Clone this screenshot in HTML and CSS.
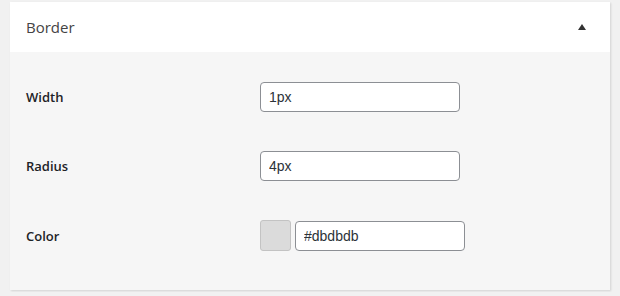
FILE: index.html
```html
<!DOCTYPE html>
<html lang="en">
<head>
    <meta charset="UTF-8">
    <title>Border</title>
    <link rel="stylesheet" href="styles.css">
</head>
<body>
    <div class="panel">
        <div class="panel-head">
            <h2>Border</h2>
            <span class="toggle"></span>
        </div>
        <div class="panel-body">
            <div class="row">
                <label for="bw">Width</label>
                <input type="text" id="bw" class="field" value="1px">
            </div>
            <div class="row">
                <label for="br">Radius</label>
                <input type="text" id="br" class="field" value="4px">
            </div>
            <div class="row">
                <label for="bc">Color</label>
                <div class="color-pick">
                    <span class="swatch"></span>
                    <input type="text" id="bc" class="field field-color" value="#dbdbdb">
                </div>
            </div>
        </div>
    </div>
</body>
</html>
```

FILE: styles.css
```css
*{
    margin:0;
    padding:0;
    box-sizing:border-box;
}
body{
    background:#f1f1f1;
    padding:2px 10px;
    font-family:"Open Sans","Noto Sans",sans-serif;
    color:#23282d;
}
.panel{
    width:600px;
    box-shadow:1px 1px 2px rgba(0,0,0,0.13);
}
.panel-head{
    height:50px;
    background:#fff;
    display:flex;
    align-items:center;
    justify-content:space-between;
    padding:0 24px 0 16px;
}
.panel-head h2{
    font-size:15px;
    font-weight:400;
    color:#444;
}
.toggle{
    width:0;
    height:0;
    border-left:4px solid transparent;
    border-right:4px solid transparent;
    border-bottom:6px solid #333;
}
.panel-body{
    background:#f6f6f6;
    padding:30px 16px 39px;
    display:flex;
    flex-direction:column;
    gap:39px;
}
.row{
    display:grid;
    grid-template-columns:234px auto;
    align-items:center;
}
.row label{
    font-size:13px;
    font-weight:600;
    color:#1d2327;
}
.field{
    width:200px;
    height:30px;
    border:1px solid #8c8f94;
    border-radius:4px;
    background:#fff;
    padding:0 8px;
    font-family:"Liberation Sans",Arial,sans-serif;
    font-size:14px;
    color:#2c3338;
}
.color-pick{
    display:flex;
    align-items:center;
    gap:4px;
}
.swatch{
    width:31px;
    height:31px;
    background:#dbdbdb;
    border:1px solid #c3c3c3;
    border-radius:3px;
}
.field-color{
    width:170px;
}
```
